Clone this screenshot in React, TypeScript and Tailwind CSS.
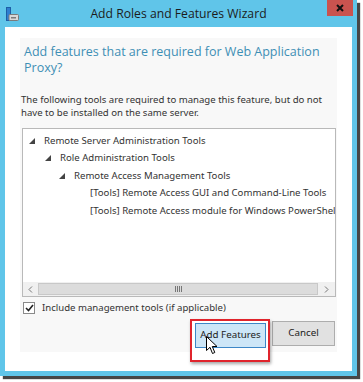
import React from 'react';

const rows = [
  { indent: 6, arrow: true, label: 'Remote Server Administration Tools' },
  { indent: 22, arrow: true, label: 'Role Administration Tools' },
  { indent: 36, arrow: true, label: 'Remote Access Management Tools' },
  { indent: 67, arrow: false, label: '[Tools] Remote Access GUI and Command-Line Tools' },
  { indent: 67, arrow: false, label: '[Tools] Remote Access module for Windows PowerShell' },
];

const Expander: React.FC = () => (
  <svg width="6" height="6" viewBox="0 0 6 6" className="shrink-0">
    <path d="M6 0 L6 6 L0 6 Z" fill="#444" />
  </svg>
);

const App: React.FC = () => {
  return (
    <div className="w-[363px] h-[382px] bg-white font-['Noto_Sans',sans-serif] text-[#333]">
      <div className="relative w-[357px] h-[376px] bg-[#60c5e9] shadow-[3px_3px_1px_rgba(50,50,50,0.9)] flex flex-col">
        {/* title bar */}
        <div className="h-[27px] flex items-center relative shrink-0">
          <svg width="13" height="15" viewBox="0 0 13 15" className="ml-[6px] mt-[1px]">
            <rect x="0.5" y="0.5" width="4" height="13" fill="#2f7fd0" stroke="#1d5fa6" />
            <rect x="3" y="7.5" width="9.5" height="6" rx="1" fill="#d8d8d8" stroke="#7b7b7b" />
            <rect x="5" y="10" width="5" height="1.5" fill="#7b7b7b" />
          </svg>
          <div className="absolute left-0 right-0 top-[5px] text-center text-[12.2px] leading-[17px] text-[#1c1c1c] font-['Open_Sans',sans-serif]">
            Add Roles and Features Wizard
          </div>
          <div className="absolute top-0 right-[4px] w-[26px] h-[16px] bg-[#c9534f] flex items-center justify-center">
            <svg width="8" height="8" viewBox="0 0 8 8">
              <path d="M1 1 L7 7 M7 1 L1 7" stroke="#111" strokeWidth="2" />
            </svg>
          </div>
        </div>

        {/* client area */}
        <div className="mx-[5px] h-[344px] bg-white pt-[11px] pl-[15px]">
          <div className="w-[317px] h-[314px] bg-[#f8f8f8] relative">
            <div className="pl-[4px] pt-[6px] text-[12.5px] leading-[16px] text-[#3e8fb5] font-['Open_Sans',sans-serif]">
              Add features that are required for Web Application
              <br />
              Proxy?
            </div>

            <div className="pl-[1px] mt-[17px] text-[9.6px] leading-[13px] text-[#333]">
              The following tools are required to manage this feature, but do not
              <br />
              have to be installed on the same server.
            </div>

            {/* tree */}
            <div className="ml-[2px] mt-[9px] w-[314px] h-[169px] border border-[#b9b9b9] bg-white flex flex-col">
              <div className="flex-1 pt-[3px] overflow-hidden">
                {rows.map((r) => (
                  <div
                    key={r.label}
                    className="h-[17.5px] flex items-center whitespace-nowrap text-[9.6px] text-[#333]"
                    style={{ paddingLeft: r.indent }}
                  >
                    {r.arrow && <Expander />}
                    <span className={r.arrow ? 'ml-[9px]' : ''}>{r.label}</span>
                  </div>
                ))}
              </div>
              {/* horizontal scrollbar */}
              <div className="h-[14px] flex items-center bg-[#f0f0f0] shrink-0">
                <div className="w-[15px] h-full flex items-center justify-center">
                  <svg width="5" height="7" viewBox="0 0 5 7">
                    <path d="M4 0.5 L1 3.5 L4 6.5" fill="none" stroke="#777" strokeWidth="1" />
                  </svg>
                </div>
                <div className="flex-1 h-[12px] bg-[#dcdcdc] border border-[#c8c8c8] flex items-center justify-center">
                  <div className="flex gap-[1px]">
                    <div className="w-[1px] h-[6px] bg-[#777]" />
                    <div className="w-[1px] h-[6px] bg-[#777]" />
                    <div className="w-[1px] h-[6px] bg-[#777]" />
                    <div className="w-[1px] h-[6px] bg-[#777]" />
                  </div>
                </div>
                <div className="w-[17px] h-full flex items-center justify-center">
                  <svg width="5" height="7" viewBox="0 0 5 7">
                    <path d="M1 0.5 L4 3.5 L1 6.5" fill="none" stroke="#777" strokeWidth="1" />
                  </svg>
                </div>
              </div>
            </div>

            {/* checkbox */}
            <div className="ml-[3px] mt-[5px] flex items-center h-[12px]">
              <div className="w-[12px] h-[12px] border border-[#8a8a8a] bg-white flex items-center justify-center">
                <svg width="9" height="8" viewBox="0 0 9 8">
                  <path d="M1 4 L3.5 6.5 L8 1" fill="none" stroke="#222" strokeWidth="1.6" />
                </svg>
              </div>
              <span className="ml-[7px] text-[9.6px] text-[#333]">Include management tools (if applicable)</span>
            </div>

            {/* buttons */}
            <div className="flex justify-end items-start mt-[5px] pr-[2px]">
              <div className="relative w-[80px] h-[43px] border-2 border-[#e0242c] shadow-[1px_2px_3px_rgba(0,0,0,0.35)] bg-white pl-[3px] pt-[2px]">
                <div className="w-[71px] h-[25px] bg-[#cde6f7] border border-[#3d87c7] flex items-center justify-center text-[9.8px] text-[#222]">
                  Add Features
                </div>
                <svg width="12" height="19" viewBox="0 0 12 19" className="absolute left-[14px] top-[15px]">
                  <path d="M0.5 0.5 L0.5 14.5 L4 11.3 L6.5 17.5 L8.8 16.5 L6.3 10.5 L11 10.5 Z" fill="#fff" stroke="#000" strokeWidth="1" strokeLinejoin="round" />
                </svg>
              </div>
              <div className="ml-[2px] mt-[2px] w-[63px] h-[25px] bg-[#e1e1e1] border border-[#adadad] flex items-center justify-center text-[9.8px] text-[#222]">
                Cancel
              </div>
            </div>
          </div>
        </div>
      </div>
    </div>
  );
};

export default App;
